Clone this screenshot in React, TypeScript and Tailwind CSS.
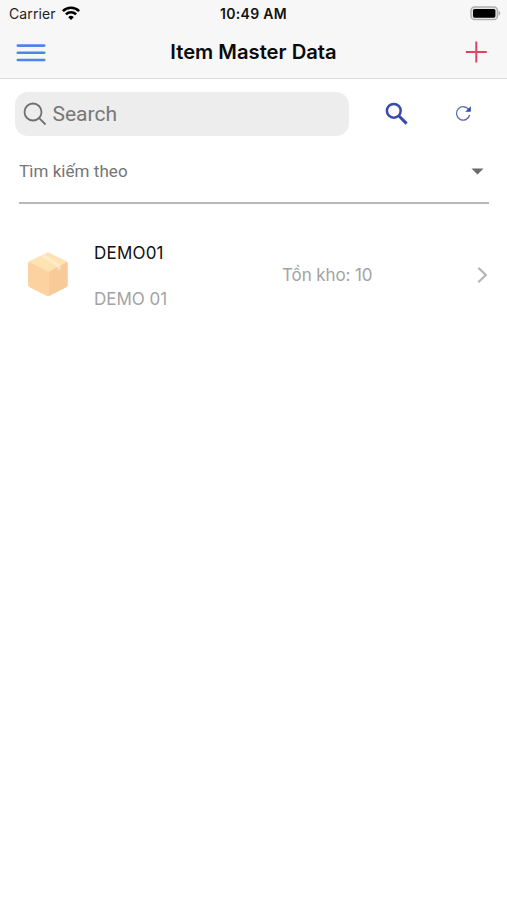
import React, { useState } from 'react';

interface Item {
  code: string;
  name: string;
  stock: number;
}

const items: Item[] = [{ code: 'DEMO01', name: 'DEMO 01', stock: 10 }];

const WifiIcon = () => (
  <svg width="18" height="14" viewBox="0 0 18 14" fill="none" stroke="#000" strokeWidth="2.6" className="-mt-[2px]">
    <path d="M0.9 5.1a11.6 11.6 0 0 1 16.2 0" />
    <path d="M3.9 8.4a7.3 7.3 0 0 1 10.2 0" />
    <path d="M9 14L6.2 11.2a4 4 0 0 1 5.6 0z" fill="#000" stroke="none" />
  </svg>
);

const BatteryIcon = () => (
  <svg width="31" height="15" viewBox="0 0 31 15">
    <rect x="1" y="1" width="26.5" height="12.6" rx="3.6" fill="#e4e4e4" stroke="#aeaeae" strokeWidth="1.4" />
    <rect x="3" y="2.9" width="22.4" height="8.8" rx="1.6" fill="#000" />
    <path d="M28.6 4.8v5c1-.4 1.7-1.5 1.7-2.5S29.6 5.2 28.6 4.8z" fill="#aeaeae" />
  </svg>
);

const BoxIcon = () => (
  <svg width="42" height="46" viewBox="0 0 42 46" className="-mt-[4px]">
    <path
      d="M21 1.5L39 10.2Q40.6 11 40.6 13V33.5Q40.6 35.3 39 36.2L22 45Q21 45.5 20 45L2.6 36.2Q1 35.3 1 33.5V13Q1 11 2.6 10.2z"
      fill="#fbd2a0"
    />
    <path d="M21 1.5L40.2 11 22 20.8 1.4 11z" fill="#fde2b3" />
    <path d="M22 20.8L40.4 11 40.6 33.5Q40.6 35.3 39 36.2L22 45z" fill="#f8ca97" />
    <path d="M14 5L17.5 3.3 34 14 30.5 16.2z" fill="#fdebc9" />
    <path d="M30.5 16.2L34 14.3V18.6L32.3 18.2 30.5 20.5z" fill="#fbdfb6" />
  </svg>
);

const StatusBar = () => (
  <div className="relative h-[27px] flex items-center justify-between pl-[9px] pr-[6px]">
    <div className="flex items-center gap-[6px] text-[14px] text-[#222]">
      <span className="tracking-[0.1px]">Carrier</span>
      <WifiIcon />
    </div>
    <span className="absolute inset-x-0 text-center text-[14px] font-semibold tracking-[0.3px] text-[#111]">
      10:49 AM
    </span>
    <BatteryIcon />
  </div>
);

const NavBar = () => (
  <div className="relative h-[51px] flex items-center justify-between pl-[16px] pr-[19px]">
    <button aria-label="Menu" className="z-10">
      <svg width="30" height="20" viewBox="0 0 30 20" stroke="#4a86ec" strokeWidth="2.6" strokeLinecap="round">
        <path d="M1.8 2.6h26.4M1.8 9.7h26.4M1.8 17h26.4" />
      </svg>
    </button>
    <h1 className="absolute inset-x-0 text-center text-[20.2px] font-semibold text-[#0a0a0a]">
      Item Master Data
    </h1>
    <button aria-label="Add" className="z-10 -mt-[1px]">
      <svg width="24" height="24" viewBox="0 0 24 24" stroke="#dc4562" strokeWidth="2">
        <path d="M12.3 1.5v21M1.8 12h21" />
      </svg>
    </button>
  </div>
);

const ItemRow: React.FC<{ item: Item }> = ({ item }) => (
  <div className="flex items-center h-[92px] pl-[27px] pr-[18px]">
    <BoxIcon />
    <div className="flex flex-col gap-[22px] w-[188px] ml-[25px] text-[17px] leading-[24px]">
      <span className="text-[#111] tracking-[0.2px]">{item.code}</span>
      <span className="text-[#a3a3a3]">{item.name}</span>
    </div>
    <span className="text-[17px] tracking-[-0.1px] text-[#a3a3a3]">Tồn kho: {item.stock}</span>
    <svg className="ml-auto -mt-[2px]" width="13" height="18" viewBox="0 0 13 18" fill="none" stroke="#b5b5b5" strokeWidth="2.2">
      <path d="M2.3 1.8L9.8 9l-7.5 7.2" />
    </svg>
  </div>
);

export default function App() {
  const [query, setQuery] = useState('');

  return (
    <div className="min-h-screen bg-white font-[Inter,sans-serif]">
      {/* Header */}
      <div className="bg-[#f7f7f7] border-b border-[#dedede]">
        <StatusBar />
        <NavBar />
      </div>

      {/* Search */}
      <div className="flex items-center pt-[13px] pl-[15px]">
        <label className="flex items-center w-[334px] h-[44px] pl-[8px] rounded-[13px] bg-[#ededed]">
          <svg width="24" height="24" viewBox="0 0 24 24" fill="none" stroke="#707070" strokeWidth="1.8">
            <circle cx="10" cy="10" r="8.5" />
            <path d="M16.2 16.2l6.3 6.3" />
          </svg>
          <input
            value={query}
            onChange={e => setQuery(e.target.value)}
            placeholder="Search"
            className="ml-[5.5px] pt-[2px] w-[270px] bg-transparent outline-none font-[Roboto,sans-serif] text-[21px] text-[#6f6f6f] placeholder:text-[#777]"
          />
        </label>
        <button aria-label="Search" className="ml-[36px] -mt-[2px]">
          <svg width="23" height="23" viewBox="0 0 23 23" fill="none" stroke="#3949ab" strokeWidth="2.5">
            <circle cx="8.8" cy="8.8" r="6.9" />
            <path d="M14 14l7.6 7.6" strokeWidth="3" />
          </svg>
        </button>
        <button aria-label="Refresh" className="ml-[47px] -mt-[2px]">
          <svg width="17" height="17" viewBox="0 0 17 17" fill="none" stroke="#5c6bc0" strokeWidth="1.4">
            <path d="M13.8 4.7A6.7 6.7 0 1 0 14.7 10" />
            <path d="M15.8 1.2v5.6h-5.6z" fill="#3949ab" stroke="none" />
          </svg>
        </button>
      </div>

      {/* Filter */}
      <div className="flex items-center justify-between h-[68px] ml-[19px] mr-[18px] pt-[5px] pr-[5px] border-b-2 border-[#b8b8b8]">
        <span className="font-[Roboto,sans-serif] text-[17px] tracking-[0.05px] text-[#757575]">
          Tìm kiếm theo
        </span>
        <svg width="13" height="7" viewBox="0 0 13 7" fill="#6b6b6b">
          <path d="M.5.5h12l-6 6z" />
        </svg>
      </div>

      {/* Items */}
      <div className="pt-[26px]">
        {items.map(item => (
          <ItemRow key={item.code} item={item} />
        ))}
      </div>
    </div>
  );
}
